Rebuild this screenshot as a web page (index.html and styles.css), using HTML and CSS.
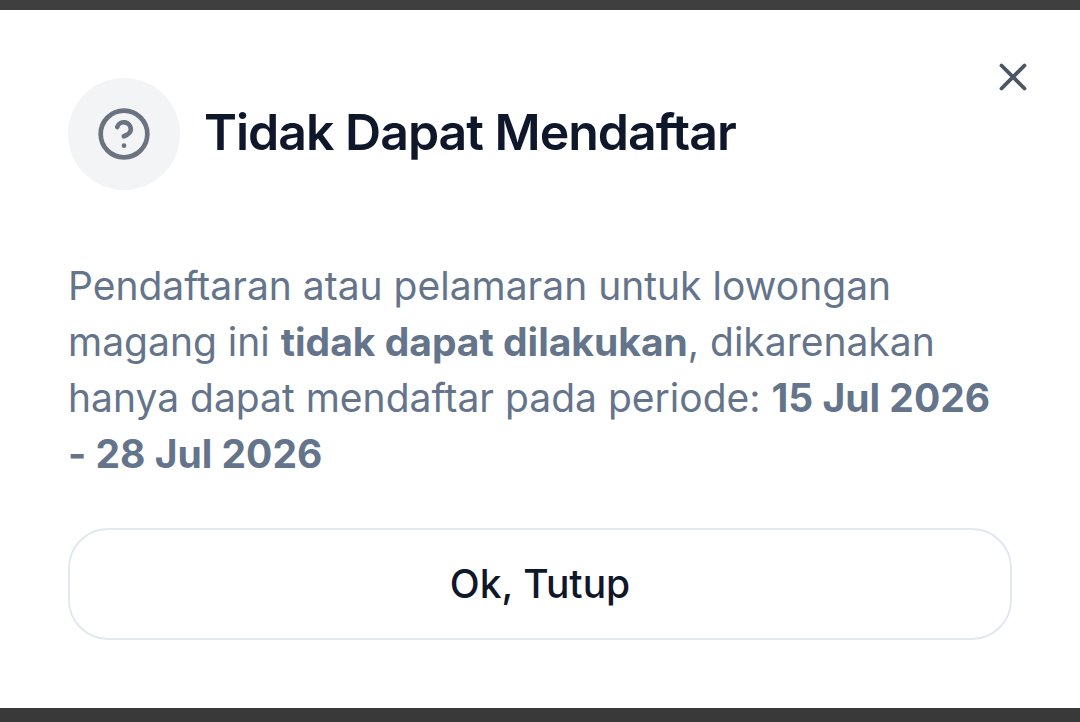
FILE: index.html
```html
<!DOCTYPE html>
<html lang="id">
<head>
  <meta charset="UTF-8">
  <meta name="viewport" content="width=device-width, initial-scale=1">
  <title>Tidak Dapat Mendaftar</title>
  <link rel="stylesheet" href="styles.css">
</head>
<body>
  <div class="overlay">
    <div class="dialog" role="dialog" aria-labelledby="dialog-title" aria-describedby="dialog-text">
      <button class="close" type="button" aria-label="Tutup">
        <svg viewBox="0 0 24 24" aria-hidden="true">
          <path d="M18 6 6 18M6 6l12 12"/>
        </svg>
      </button>

      <div class="dialog-header">
        <div class="dialog-icon">
          <svg viewBox="0 0 24 24" aria-hidden="true">
            <circle cx="12" cy="12" r="10"/>
            <path d="M9.09 9a3 3 0 0 1 5.83 1c0 2-3 3-3 3"/>
            <path d="M12 17h.01"/>
          </svg>
        </div>
        <h2 id="dialog-title">Tidak Dapat Mendaftar</h2>
      </div>

      <p class="dialog-text" id="dialog-text">Pendaftaran atau pelamaran untuk lowongan magang ini <strong>tidak dapat dilakukan</strong>, dikarenakan hanya dapat mendaftar pada periode: <strong>15 Jul 2026 - 28 Jul 2026</strong></p>

      <button class="btn" type="button">Ok, Tutup</button>
    </div>
  </div>
</body>
</html>
```
FILE: styles.css
```css
* {
  box-sizing: border-box;
}
body {
  font-family: Inter, "Liberation Sans", sans-serif;
  margin: 0;
}
.overlay {
  min-height: 100vh;
  padding: 10px 0 14px;
  display: flex;
  background: linear-gradient(#3f3f3f, #393939);
}
.dialog {
  position: relative;
  flex: 1;
  background: white;
  padding: 68px;
}
.close {
  position: absolute;
  top: 44px;
  right: 44px;
  padding: 0;
  border: 0;
  background: none;
  color: #4b5563;
  cursor: pointer;
}
svg {
  display: block;
  fill: none;
  stroke: currentColor;
  stroke-width: 2;
  stroke-linecap: round;
  stroke-linejoin: round;
}
.close svg {
  width: 46px;
  height: 46px;
}
.dialog-header {
  display: flex;
  align-items: center;
  gap: 24px;
  margin-bottom: 68px;
}
.dialog-icon {
  display: flex;
  align-items: center;
  justify-content: center;
  flex-shrink: 0;
  width: 112px;
  height: 112px;
  border-radius: 50%;
  background: #f3f4f6;
  color: #6b7280;
}
.dialog-icon svg {
  width: 56px;
  height: 56px;
}
h2 {
  margin: 0;
  padding-bottom: 4px;
  color: #0f172a;
  font-size: 50px;
  font-weight: 600;
  line-height: 56px;
  letter-spacing: -1px;
}
.dialog-text {
  margin: 0 0 46px;
  color: #64748b;
  font-size: 39px;
  line-height: 56px;
}
.dialog-text strong {
  font-weight: 700;
}
.btn {
  display: block;
  width: 100%;
  padding: 26px 32px;
  border: 2px solid #e2e8f0;
  border-radius: 40px;
  background: white;
  color: #0f172a;
  font-family: inherit;
  font-size: 39px;
  font-weight: 500;
  line-height: 56px;
  cursor: pointer;
}
```
